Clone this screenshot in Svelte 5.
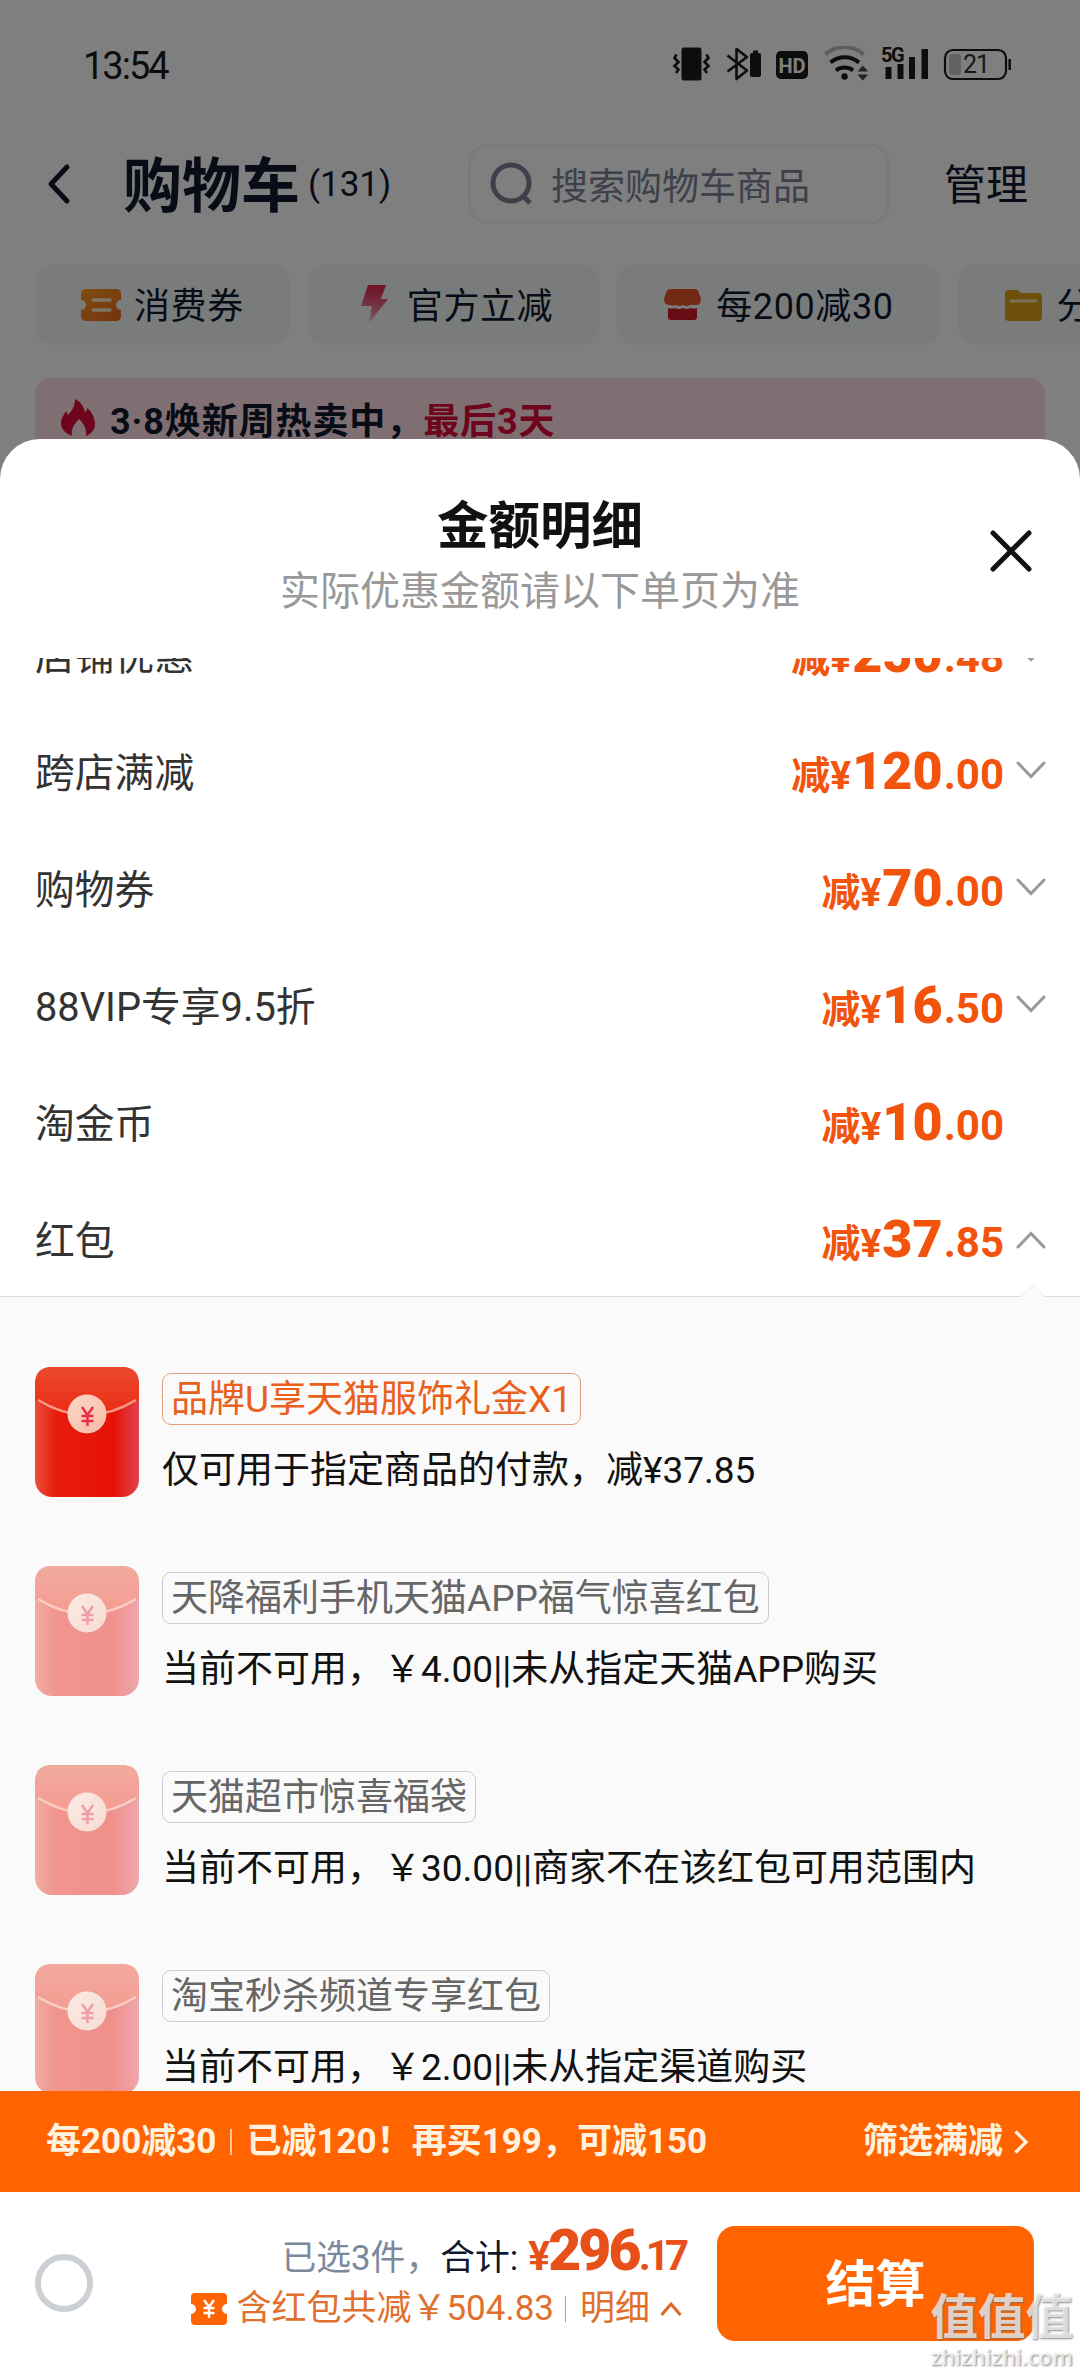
<script lang="ts">
  interface Discount {
    name: string;
    whole: string;
    cents: string;
    toggle: 'down' | 'up' | 'none';
  }

  interface RedPacket {
    tag: string;
    desc: string;
    active: boolean;
  }

  const discounts: Discount[] = [
    { name: '店铺优惠', whole: '250', cents: '.48', toggle: 'down' },
    { name: '跨店满减', whole: '120', cents: '.00', toggle: 'down' },
    { name: '购物券', whole: '70', cents: '.00', toggle: 'down' },
    { name: '88VIP专享9.5折', whole: '16', cents: '.50', toggle: 'down' },
    { name: '淘金币', whole: '10', cents: '.00', toggle: 'none' },
    { name: '红包', whole: '37', cents: '.85', toggle: 'up' }
  ];

  const packets: RedPacket[] = [
    { tag: '品牌U享天猫服饰礼金X1', desc: '仅可用于指定商品的付款，减¥37.85', active: true },
    { tag: '天降福利手机天猫APP福气惊喜红包', desc: '当前不可用，￥4.00||未从指定天猫APP购买', active: false },
    { tag: '天猫超市惊喜福袋', desc: '当前不可用，￥30.00||商家不在该红包可用范围内', active: false },
    { tag: '淘宝秒杀频道专享红包', desc: '当前不可用，￥2.00||未从指定渠道购买', active: false }
  ];
</script>

<div class="screen">
  <div class="page">
    <div class="status">
      <span class="time">13:54</span>
      <svg class="status-icons" width="340" height="36" viewBox="672 46 340 36">
        <!-- vibrate -->
        <rect x="681.5" y="47.5" width="20" height="33" rx="2.5" fill="#1a1a1a" />
        <path d="M676.5 54.5l-2 3.5 4 4-4 4 4 3.5-2.5 3.5M706.5 54.5l2 3.5-4 4 4 4-4 3.5 2.5 3.5" fill="none" stroke="#1a1a1a" stroke-width="2.6" />
        <!-- bluetooth with battery -->
        <path d="M727.5 55.5l19.500 15-10.500 8.500v-30l10.500 8-19.500 14.500" fill="none" stroke="#1a1a1a" stroke-width="2.6" stroke-linejoin="round" />
        <rect x="750" y="53" width="11" height="24" rx="2" fill="#1a1a1a" />
        <rect x="753" y="50.5" width="5" height="3" fill="#1a1a1a" />
        <!-- HD -->
        <rect x="776" y="51" width="32" height="28" rx="5" fill="#1a1a1a" />
        <text x="792" y="72.5" text-anchor="middle" class="hd">HD</text>
        <!-- wifi -->
        <g fill="none" stroke-width="4">
          <path d="M825.5 54.5a28 28 0 0 1 38 0" stroke="#bdbdbd" />
          <path d="M830.5 62.5a22 22 0 0 1 28.5 0" stroke="#1a1a1a" />
          <path d="M836 70.5a14 14 0 0 1 17 0" stroke="#1a1a1a" />
        </g>
        <circle cx="844.5" cy="76.5" r="3.2" fill="#1a1a1a" />
        <path d="M857.5 71.5l5.300-6 5.300 6zM857.5 74.5l5.300 6 5.300-6z" fill="#444" />
        <!-- signal -->
        <text x="881" y="61.5" class="gen">5G</text>
        <path d="M885.5 67h6v12h-6zM897.5 64h6v15h-6zM909 57h6v22h-6zM921.5 49h6.500v30h-6.500z" fill="#1a1a1a" />
        <!-- battery -->
        <rect x="945" y="50" width="61" height="29" rx="8" fill="none" stroke="#1a1a1a" stroke-width="2.2" />
        <rect x="949" y="54" width="12" height="21" rx="3" fill="#c4c4c4" />
        <path d="M1009.7 59v11" stroke="#1a1a1a" stroke-width="2.5" />
        <text x="976" y="73" text-anchor="middle" class="battery">21</text>
      </svg>
    </div>

    <div class="header">
      <svg class="back" width="26" height="42" viewBox="0 0 26 42">
        <path d="M21 4L5 21l16 17" fill="none" stroke="#11182f" stroke-width="5" stroke-linecap="round" stroke-linejoin="round" />
      </svg>
      <h1>购物车</h1>
      <span class="count">(131)</span>
      <div class="search">
        <svg width="44" height="44" viewBox="0 0 44 44" fill="none" stroke="#7c8294" stroke-width="5">
          <circle cx="21" cy="21" r="18" />
          <path d="M32 33l8 8" />
        </svg>
        <span>搜索购物车商品</span>
      </div>
      <span class="manage">管理</span>
    </div>

    <div class="chips">
      <div class="chip">
        <svg width="40" height="40" viewBox="0 0 40 40">
          <defs>
            <linearGradient id="ticket" x1="0" y1="0" x2="1" y2="1">
              <stop offset="0" stop-color="#ff9c20" />
              <stop offset="1" stop-color="#e8661c" />
            </linearGradient>
          </defs>
          <path d="M5 4h30q5 0 5 5v6a5 5 0 0 0 0 10v6q0 5-5 5H5q-5 0-5-5v-6a5 5 0 0 0 0-10V9q0-5 5-5z" fill="url(#ticket)" />
          <path d="M12 15h17M12 25h17" stroke="#ffe6c8" stroke-width="3.5" stroke-linecap="round" />
        </svg>
        <span>消费券</span>
      </div>
      <div class="chip">
        <svg width="40" height="40" viewBox="0 0 40 40">
          <defs>
            <linearGradient id="bolt" x1="0" y1="0" x2="0" y2="1">
              <stop offset="0" stop-color="#e0204f" />
              <stop offset="0.6" stop-color="#e8708c" />
              <stop offset="1" stop-color="#f0c8d2" />
            </linearGradient>
          </defs>
          <path d="M14 0h18l-5 14h7L15 38l3-17H7z" fill="url(#bolt)" />
        </svg>
        <span>官方立减</span>
      </div>
      <div class="chip">
        <svg width="40" height="40" viewBox="0 0 40 40">
          <path d="M8 4h24q3 0 4 4l2 6q0 6-5 6-4 0-6 0-3 2-7 0-4 2-7 0-3 1-6 0-6 0-6-6l2-6q1-4 5-4z" fill="#e65428" />
          <path d="M5 23q4 1 7 0 4 2 8 0 4 2 8 0 4 1 6 0v9q0 3-3 3H8q-3 0-3-3z" fill="#d0182a" />
        </svg>
        <span>每200减30</span>
      </div>
      <div class="chip">
        <svg width="40" height="40" viewBox="0 0 40 40">
          <path d="M5 5h8q2 0 4 3h17q4 0 4 4v20q0 4-4 4H5q-4 0-4-4V9q0-4 4-4z" fill="#dfa016" />
          <path d="M7 16h25" stroke="#f8e2a8" stroke-width="3" stroke-linecap="round" />
        </svg>
        <span>分类</span>
      </div>
    </div>

    <div class="banner">
      <svg width="34" height="40" viewBox="0 0 34 40">
        <path d="M14 1c6 3 9 8 10 13 2-1 2-3 2-4 5 4 8 10 8 16 0 6-4 10-9 12 1-8-3-13-7-17-5 5-8 10-7 17C4 35 0 31 0 25c0-5 3-8 5-12l2 4C12 12 14 7 14 1z" fill="#dc0a38" />
      </svg>
      <span class="banner-text">3·8焕新周热卖中，</span>
      <span class="banner-text hot">最后3天</span>
    </div>
  </div>

  <div class="mask"></div>

  <div class="sheet">
    <div class="sheet-head">
      <h2>金额明细</h2>
      <p>实际优惠金额请以下单页为准</p>
      <svg class="close" width="46" height="46" viewBox="0 0 46 46">
        <path d="M5 5l36 36M41 5L5 41" stroke="#111" stroke-width="5" stroke-linecap="round" />
      </svg>
    </div>

    <div class="detail">
      <div class="rows">
        {#each discounts as item}
          <div class="row">
            <span class="name">{item.name}</span>
            <span class="price">减¥<b>{item.whole}</b><i>{item.cents}</i></span>
            <svg class="arrow" width="30" height="20" viewBox="0 0 30 20">
              {#if item.toggle === 'down'}
                <path d="M2 2l13 13.500L28 2" />
              {:else if item.toggle === 'up'}
                <path d="M2 18L15 4.500 28 18" />
              {/if}
            </svg>
          </div>
        {/each}
      </div>

      <div class="packets">
        <svg class="notch" width="26" height="14" viewBox="0 0 26 14">
          <path d="M0 14L13 0l13 14z" fill="#fafafa" />
          <path d="M0 13L13 1l13 12" fill="none" stroke="#ededed" />
        </svg>
        {#each packets as packet}
          <div class="packet" class:active={packet.active}>
            <svg class="envelope" width="104" height="130" viewBox="0 0 104 130">
              <defs>
                <linearGradient id="flap" x1="0" y1="0" x2="0" y2="1">
                  <stop offset="0" stop-color="#e84a2e" />
                  <stop offset="1" stop-color="#ee2a14" />
                </linearGradient>
                <linearGradient id="body" x1="0" y1="0" x2="1" y2="0">
                  <stop offset="0" stop-color="#e8503c" />
                  <stop offset="0.2" stop-color="#e81c0c" />
                  <stop offset="0.75" stop-color="#e61206" />
                  <stop offset="1" stop-color="#e04450" />
                </linearGradient>
                <linearGradient id="seal" x1="0" y1="0" x2="1" y2="1">
                  <stop offset="0" stop-color="#fbd9c8" />
                  <stop offset="1" stop-color="#f6b9a4" />
                </linearGradient>
              </defs>
              <rect width="104" height="130" rx="17" fill="url(#body)" />
              <path d="M0 33V17Q0 0 17 0h70q17 0 17 17v16Q52 65 0 33z" fill="url(#flap)" />
              <path d="M3 33q49 30 98 0" fill="none" stroke="#f79a88" stroke-width="2.5" />
              <circle cx="52" cy="49" r="19.5" fill="#c81a10" opacity="0.4" />
              <circle cx="52" cy="47" r="19.5" fill="url(#seal)" />
              <path d="M47 40l5.500 8 5.500-8M52.500 48v11M46.500 49h12M46.500 54h12" fill="none" stroke="#e2304a" stroke-width="2.5" />
            </svg>
            <div class="info">
              <span class="tag">{packet.tag}</span>
              <span class="desc">{packet.desc}</span>
            </div>
          </div>
        {/each}
      </div>
    </div>

    <div class="promo">
      <span class="promo-text">每200减30</span>
      <i class="bar"></i>
      <span class="promo-text">已减120！再买199，可减150</span>
      <span class="promo-text filter">筛选满减</span>
      <svg width="16" height="26" viewBox="0 0 16 26">
        <path d="M2.500 2.500L13 13 2.500 23.500" fill="none" stroke="#fff3e0" stroke-width="3.2" />
      </svg>
    </div>

    <div class="footer">
      <div class="radio"></div>
      <div class="summary">
        <div class="total">
          <span class="picked">已选3件，</span>
          <span class="label">合计:</span>
          <span class="sum">¥<b>296</b><i>.17</i></span>
        </div>
        <div class="saved">
          <svg width="36" height="32" viewBox="0 0 36 32">
            <path d="M4 0h28q4 0 4 4v7a5 5 0 0 0 0 10v7q0 4-4 4H4q-4 0-4-4v-7a5 5 0 0 0 0-10V4q0-4 4-4z" fill="#ff6400" />
            <path d="M13 7l5 7 5-7M18 14v11M12.500 15h11M12.500 20h11" fill="none" stroke="#fff" stroke-width="2.4" />
          </svg>
          <span>含红包共减￥504.83</span>
          <i class="bar"></i>
          <span>明细</span>
          <svg class="up" width="22" height="16" viewBox="0 0 22 16">
            <path d="M1.500 14L11 3l9.500 11" fill="none" stroke="#e0652a" stroke-width="3" />
          </svg>
        </div>
      </div>
      <div class="pay">结算</div>
    </div>
  </div>

  <div class="watermark">
    <span class="mark">值值值</span>
    <span class="site">zhizhizhi.com</span>
  </div>
</div>

<style>
  :global(body) {
    background: #fff;
  }

  .screen {
    position: relative;
    width: 1080px;
    height: 2376px;
    overflow: hidden;
    font-family: Roboto, 'Noto Sans CJK SC', sans-serif;
    background: #fff;
  }

  .screen :global(*) {
    box-sizing: border-box;
  }

  h1,
  h2,
  p {
    margin: 0;
  }

  i {
    font-style: normal;
  }

  svg {
    display: block;
    flex-shrink: 0;
  }

  .status {
    display: flex;
    align-items: center;
    justify-content: space-between;
    height: 128px;
    padding: 0 68px 0 83px;
  }

  .time {
    font-size: 38px;
    letter-spacing: -2px;
    line-height: 44px;
    padding-top: 3px;
    color: #1a1a1a;
  }

  .hd {
    font-size: 20px;
    font-weight: 700;
    fill: #fff;
  }

  .gen {
    font-size: 20px;
    font-weight: 700;
    letter-spacing: -1.5px;
    fill: #1a1a1a;
  }

  .battery {
    font-size: 25px;
    letter-spacing: -1px;
    fill: #333;
  }

  .header {
    display: flex;
    align-items: center;
    height: 110px;
    padding: 2px 52px 0 46px;
  }

  h1 {
    margin-left: 51px;
    font-size: 59px;
    font-weight: 700;
    line-height: 80px;
    color: #11182f;
    padding-top: 6px;
  }

  .count {
    margin-left: 8px;
    font-size: 35px;
    color: #11182f;
  }

  .search {
    display: flex;
    align-items: center;
    width: 422px;
    height: 80px;
    margin-left: auto;
    padding-left: 19px;
    gap: 17px;
    border: 3px solid #f4f4f6;
    border-radius: 20px;
    font-size: 37px;
    color: #7c8294;
  }

  .manage {
    margin-left: 54px;
    font-size: 42px;
    line-height: 60px;
    color: #11182f;
    padding-top: 4px;
  }

  .chips {
    display: flex;
    gap: 18px;
    padding: 26px 0 0 35px;
  }

  .chip {
    display: flex;
    align-items: center;
    flex-shrink: 0;
    gap: 13px;
    height: 81px;
    padding: 0 46px;
    border-radius: 18px;
    background: #f5f9f9;
    font-size: 36px;
    letter-spacing: 0.6px;
    color: #11182f;
  }

  .chip span {
    padding-bottom: 4px;
  }

  .banner {
    display: flex;
    align-items: center;
    height: 80px;
    margin: 33px 35px 0;
    padding: 0 26px;
    border-radius: 16px 16px 0 0;
    background: #ffdfe4;
  }

  .banner-text {
    margin-left: 15px;
    font-size: 36px;
    font-weight: 700;
    letter-spacing: 0.9px;
    color: #11182f;
  }

  .banner-text.hot {
    margin-left: 0;
    color: #dc0a38;
  }

  .mask {
    position: absolute;
    inset: 0;
    background: rgba(0, 0, 0, 0.5);
  }

  .sheet {
    position: absolute;
    left: 0;
    right: 0;
    top: 439px;
    bottom: 0;
    display: flex;
    flex-direction: column;
    border-radius: 40px 40px 0 0;
    background: #fff;
    overflow: hidden;
  }

  .sheet-head {
    position: relative;
    height: 219px;
    padding-top: 56px;
    text-align: center;
    flex-shrink: 0;
  }

  h2 {
    font-size: 51.5px;
    font-weight: 700;
    line-height: 64px;
    color: #111;
  }

  .sheet-head p {
    margin-top: 5px;
    font-size: 40px;
    line-height: 56px;
    color: #999;
  }

  .close {
    position: absolute;
    right: 46px;
    top: 89px;
  }

  .detail {
    height: 1433px;
    overflow: hidden;
    flex-shrink: 0;
  }

  .rows {
    margin-top: -60px;
  }

  .row {
    display: flex;
    align-items: center;
    height: 117px;
    padding: 0 34px 0 35px;
  }

  .name {
    flex: 1;
    padding-bottom: 8px;
    font-size: 39.8px;
    color: #333;
  }

  .price {
    font-size: 39px;
    font-weight: 700;
    line-height: 60px;
    color: #f2540e;
  }

  .price b {
    margin-left: 1px;
    font-size: 52px;
  }

  .price i {
    margin-left: 1px;
    font-size: 42px;
  }

  .arrow {
    margin-left: 12px;
    margin-bottom: 6px;
    fill: none;
    stroke: #999;
    stroke-width: 3;
    stroke-linecap: round;
  }

  .packets {
    position: relative;
    display: flex;
    flex-direction: column;
    gap: 69px;
    margin-top: -4px;
    padding: 70px 35px 0;
    border-top: 1px solid #d9d9d9;
    background: #fafafa;
  }

  .notch {
    position: absolute;
    right: 34px;
    top: -13px;
  }

  .packet {
    display: flex;
    height: 130px;
  }

  .envelope {
    opacity: 0.45;
  }

  .active .envelope {
    opacity: 1;
  }

  .info {
    display: flex;
    flex-direction: column;
    align-items: flex-start;
    margin-left: 23px;
    padding-top: 6px;
  }

  .tag {
    height: 52px;
    padding: 0 8px;
    border: 1px solid #ccc;
    border-radius: 9px;
    font-size: 37px;
    line-height: 52px;
    color: #666;
    white-space: nowrap;
  }

  .active .tag {
    border-color: #e0a080;
    color: #e8601c;
  }

  .desc {
    margin-top: 20px;
    font-size: 37px;
    line-height: 52px;
    color: #111;
    white-space: nowrap;
  }

  .promo {
    display: flex;
    align-items: center;
    height: 101px;
    padding: 0 51px 0 46px;
    background: #ff6400;
    font-size: 35px;
    font-weight: 700;
    color: #fff3e0;
    flex-shrink: 0;
  }

  .promo-text {
    padding-bottom: 8px;
  }

  .promo .bar {
    width: 2px;
    height: 26px;
    margin: 0 14px 0 14px;
    background: #ffc89a;
  }

  .filter {
    margin-left: auto;
    margin-right: 10px;
  }

  .footer {
    display: flex;
    flex: 1;
    padding: 34px 46px 0 35px;
  }

  .radio {
    width: 58px;
    height: 58px;
    margin-top: 28px;
    border: 6px solid #ccd0d5;
    border-radius: 50%;
  }

  .summary {
    display: flex;
    flex-direction: column;
    align-items: flex-end;
    margin-left: auto;
    margin-right: 29px;
  }

  .total {
    display: flex;
    align-items: baseline;
    height: 60px;
    margin-top: -5px;
    margin-right: 4px;
    line-height: 60px;
    font-size: 34.8px;
  }

  .picked {
    color: #7c889c;
  }

  .label {
    color: #11182f;
  }

  .sum {
    margin-left: 10px;
    font-size: 41px;
    font-weight: 700;
    letter-spacing: -2px;
    color: #e8501a;
  }

  .sum b {
    font-size: 57px;
    letter-spacing: -2.9px;
  }

  .sum i {
    font-size: 42px;
    letter-spacing: -5px;
  }

  .saved {
    display: flex;
    align-items: center;
    height: 48px;
    margin-top: 4px;
    margin-right: 6px;
    font-size: 35px;
    line-height: 48px;
    color: #e0702c;
  }

  .saved span {
    margin-left: 9px;
  }

  .saved .bar {
    width: 1px;
    height: 26px;
    margin: 0 5px 0 11px;
    background: #e0905c;
  }

  .up {
    margin-left: 10px;
  }

  .pay {
    width: 317px;
    height: 115px;
    border-radius: 18px;
    background: #ff6400;
    font-size: 50px;
    font-weight: 700;
    line-height: 118px;
    text-align: center;
    color: #fff;
  }

  .watermark {
    position: absolute;
    right: 7px;
    bottom: 5px;
    display: flex;
    flex-direction: column;
    align-items: center;
    color: rgba(255, 255, 255, 0.7);
    text-shadow: 1px 1px 2px rgba(110, 110, 110, 0.8);
  }

  .mark {
    font-size: 47.5px;
    font-weight: 700;
    line-height: 50px;
  }

  .site {
    font-family: 'Open Sans', sans-serif;
    font-size: 21.8px;
    font-weight: 600;
    line-height: 28px;
  }
</style>
